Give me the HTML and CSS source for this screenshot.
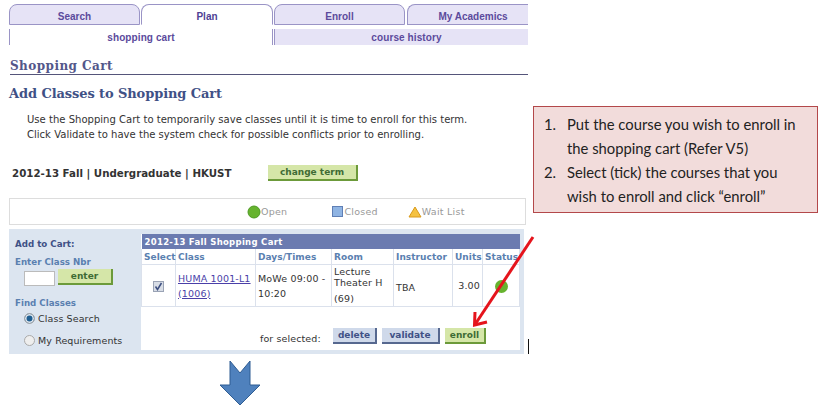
FILE: index.html
```html
<!DOCTYPE html>
<html lang="en">
<head>
    <meta charset="UTF-8">
    <meta name="viewport" content="width=device-width, initial-scale=1.0">
    <title>Shopping Cart</title>
    <link rel="stylesheet" href="styles.css">
</head>
<body>
    <div class="page">
        <div class="tabs">
            <div class="tab tab-search">Search</div>
            <div class="tab tab-plan active">Plan</div>
            <div class="tab tab-enroll">Enroll</div>
            <div class="tab tab-acad">My Academics</div>
        </div>
        <div class="subtabs">
            <div class="subtab sub-active">shopping cart</div>
            <div class="subtab sub-other">course history</div>
        </div>

        <h2 class="page-title">Shopping Cart</h2>
        <h1 class="main-title">Add Classes to Shopping Cart</h1>
        <p class="intro">Use the Shopping Cart to temporarily save classes until it is time to enroll for this term.<br>Click Validate to have the system check for possible conflicts prior to enrolling.</p>

        <div class="term-row">
            <span class="term">2012-13 Fall | Undergraduate | HKUST</span>
            <button class="btn btn-green btn-term">change term</button>
        </div>

        <div class="legend">
            <span class="legend-item legend-open"><svg width="14" height="14" viewBox="0 0 14 14"><circle cx="7" cy="7" r="6" fill="#66b32e" stroke="#4d9a22"/></svg>Open</span>
            <span class="legend-item legend-closed"><svg width="12" height="12" viewBox="0 0 12 12"><rect x="0.5" y="0.5" width="10" height="10" fill="#8fb4e3" stroke="#5f7fb5"/></svg>Closed</span>
            <span class="legend-item legend-wait"><svg width="14" height="12" viewBox="0 0 14 12"><path d="M7 1 L13 11 H1 Z" fill="#f5c242" stroke="#d99a1c"/></svg>Wait List</span>
        </div>

        <div class="cart-area">
            <div class="side">
                <div class="side-title">Add to Cart:</div>
                <div class="side-label">Enter Class Nbr</div>
                <div class="enter-row">
                    <input class="nbr" type="text">
                    <button class="btn btn-green btn-enter">enter</button>
                </div>
                <div class="side-label find">Find Classes</div>
                <label class="radio-row"><span class="radio checked"></span>Class Search</label>
                <label class="radio-row"><span class="radio"></span>My Requirements</label>
            </div>
            <div class="main">
                <table class="cart">
                    <colgroup>
                        <col class="c-select">
                        <col class="c-class">
                        <col class="c-days">
                        <col class="c-room">
                        <col class="c-inst">
                        <col class="c-units">
                        <col class="c-status">
                    </colgroup>
                    <thead>
                        <tr><th colspan="7" class="cart-head">2012-13 Fall Shopping Cart</th></tr>
                        <tr class="cols">
                            <th>Select</th>
                            <th>Class</th>
                            <th>Days/Times</th>
                            <th>Room</th>
                            <th>Instructor</th>
                            <th>Units</th>
                            <th>Status</th>
                        </tr>
                    </thead>
                    <tbody>
                        <tr>
                            <td class="center"><span class="check"><svg width="9" height="9" viewBox="0 0 9 9"><path d="M1.5 4.5 L3.5 7.5 L7.5 1" fill="none" stroke="#3d4f80" stroke-width="1.5"/></svg></span></td>
                            <td><a href="#">HUMA 1001-L1<br>(1006)</a></td>
                            <td>MoWe 09:00 -<br>10:20</td>
                            <td class="room">Lecture<br>Theater H<span class="room-no">(69)</span></td>
                            <td class="tba">TBA</td>
                            <td class="units">3.00</td>
                            <td class="center"><span class="dot"></span></td>
                        </tr>
                    </tbody>
                </table>
                <div class="actions">
                    <span class="for-selected">for selected:</span>
                    <button class="btn btn-blue btn-delete">delete</button>
                    <button class="btn btn-blue btn-validate">validate</button>
                    <button class="btn btn-green btn-enroll">enroll</button>
                </div>
            </div>
        </div>

        <!-- annotations on top of the screenshot -->
        <div class="callout">
            <ol>
                <li><span class="num">1.</span><span>Put the course you wish to enroll in<br>the shopping cart (Refer V5)</span></li>
                <li><span class="num">2.</span><span>Select (tick) the courses that you<br>wish to enroll and click “enroll”</span></li>
            </ol>
        </div>
        <span class="cursor"></span>
        <svg class="red-arrow" width="70" height="100" viewBox="0 0 70 100">
            <path d="M63 2 L6 88" fill="none" stroke="#e5141c" stroke-width="3"/>
            <path d="M5 77 L4.5 90 L17 87" fill="none" stroke="#e5141c" stroke-width="3"/>
        </svg>
        <svg class="down-arrow" width="42" height="48" viewBox="0 0 42 48">
            <path d="M11 1 L21 13 L31 1 V25 H41 L21 45 L1 25 H11 Z" fill="#4f81bd" stroke="#2f5d93"/>
        </svg>
    </div>
</body>
</html>
```

FILE: styles.css
```css
/* page */
body {
    margin: 0;
    background-color: #fff;
    font-family: "DejaVu Sans", sans-serif;
}
.page {
    position: relative;
    width: 823px;
    height: 406px;
    overflow: hidden;
    padding: 4px 0 0 9px;
    box-sizing: border-box;
}

/* tabs */
.tabs {
    display: flex;
    width: 519px;
    height: 21px;
}
.tab {
    box-sizing: border-box;
    height: 21px;
    background-color: #e6e3f6;
    border: 1px solid #9a94c6;
    border-radius: 8px 8px 0 0;
    color: #5b4a9c;
    font-family: "Liberation Sans", sans-serif;
    font-size: 10px;
    font-weight: bold;
    line-height: 23px;
    text-align: center;
}
.tab-search { width: 131px; margin-right: 1px; }
.tab-plan { width: 132px; margin-right: 1px; }
.tab-enroll { width: 131px; margin-right: 2px; }
.tab-acad {
    width: 121px;
    padding-left: 10px;
    border-right: none;
    border-radius: 8px 0 0 0;
}
.tab.active {
    background-color: #fff;
    border-bottom-color: #fff;
    color: #4f3f94;
}
.subtabs {
    display: flex;
    height: 16px;
    margin-top: 4px;
    width: 519px;
}
.subtab {
    box-sizing: border-box;
    height: 16px;
    font-family: "Liberation Sans", sans-serif;
    font-size: 10px;
    font-weight: bold;
    letter-spacing: 0.1px;
    line-height: 18px;
    text-align: center;
    color: #5b4a9c;
}
.sub-active {
    width: 264px;
    background-color: #fff;
    border-left: 1px solid #9a94c6;
    border-right: 1px solid #9a94c6;
}
.sub-other {
    width: 254px;
    margin-left: 1px;
    padding-left: 10px;
    background-color: #e6e3f6;
    border-left: 1px solid #9a94c6;
}

/* headings */
.page-title {
    box-sizing: border-box;
    width: 518px;
    height: 30px;
    margin: 0 0 0 1px;
    padding-top: 13px;
    border-bottom: 1px solid #55557a;
    color: #53578a;
    font-family: "DejaVu Serif", serif;
    font-size: 12px;
    font-weight: bold;
    letter-spacing: 0.45px;
    line-height: 16px;
}
.main-title {
    margin: 9px 0 0 0;
    color: #3f5186;
    font-family: "DejaVu Serif", serif;
    font-size: 13px;
    font-weight: bold;
    letter-spacing: -0.1px;
    line-height: 20px;
}
.intro {
    margin: 8px 0 0 18px;
    color: #333;
    font-size: 10.05px;
    line-height: 15px;
}

/* term row */
.term-row {
    display: flex;
    align-items: flex-start;
    height: 20px;
    margin-top: 22px;
}
.term {
    width: 259px;
    padding: 2px 0 0 3px;
    box-sizing: border-box;
    color: #333;
    font-size: 10.25px;
    font-weight: bold;
    line-height: 14px;
}
.btn {
    box-sizing: border-box;
    padding: 0;
    border: none;
    font-family: "DejaVu Sans", sans-serif;
    font-size: 9px;
    font-weight: bold;
    line-height: 13px;
}
.btn-green {
    background-color: #d5e6a8;
    border-right: 2px solid #6c9a3a;
    border-bottom: 2px solid #6c9a3a;
    color: #3f6b35;
}
.btn-blue {
    background-color: #cfd9ea;
    border-right: 2px solid #56688f;
    border-bottom: 2px solid #56688f;
    color: #3f5186;
}
.btn-term {
    width: 90px;
    height: 16px;
    margin-top: 1px;
}

/* legend */
.legend {
    box-sizing: border-box;
    display: flex;
    align-items: center;
    width: 517px;
    height: 27px;
    margin-top: 14px;
    padding-left: 237px;
    border: 1px solid #ddd;
    color: #999;
    font-size: 9.5px;
    letter-spacing: 0.25px;
}
.legend-item {
    display: flex;
    align-items: center;
}
.legend-closed { margin-left: 45px; }
.legend-wait { margin-left: 30px; }

/* cart area */
.cart-area {
    display: flex;
    box-sizing: border-box;
    width: 515px;
    height: 125px;
    margin-top: 4px;
    padding-bottom: 4px;
    background-color: #dce5f0;
}
.side {
    box-sizing: border-box;
    width: 132px;
    padding: 9px 0 0 6px;
    font-size: 8.7px;
}
.side-title {
    color: #3f5186;
    font-weight: bold;
    line-height: 12px;
}
.side-label {
    margin-top: 6px;
    color: #5a80b0;
    font-weight: bold;
    line-height: 12px;
}
.enter-row {
    display: flex;
    margin: 1px 0 0 9px;
}
.nbr {
    box-sizing: border-box;
    width: 31px;
    height: 15px;
    padding: 0;
    margin-top: 2px;
    background-color: #fff;
    border: 1px solid #bbb;
}
.btn-enter {
    width: 55px;
    height: 16px;
    margin-left: 3px;
}
.find {
    margin-top: 11px;
    margin-bottom: -1px;
}
.radio-row {
    display: flex;
    align-items: center;
    height: 20px;
    margin-bottom: 2px;
    margin-left: 9px;
    color: #333;
    font-size: 9.5px;
    letter-spacing: 0.1px;
}
.radio {
    box-sizing: border-box;
    width: 11px;
    height: 11px;
    margin-right: 3px;
    background-color: #eee;
    border: 1px solid #aaa;
    border-radius: 50%;
}
.radio.checked {
    background-color: #1f5f92;
    box-shadow: inset 0 0 0 1.5px #dfe6ee;
}
.main {
    flex: 1;
    background-color: #fff;
    margin-right: 4px;
    margin-top: 5px;
}

/* table */
.cart {
    width: 379px;
    table-layout: fixed;
    border-collapse: collapse;
    font-size: 9.5px;
    color: #333;
}
.cart-head {
    height: 15px;
    padding: 0 0 0 3px;
    background-color: #6b7bb0;
    color: #fff;
    font-size: 8.5px;
    font-weight: bold;
    letter-spacing: 0.3px;
    text-align: left;
}
.cols th {
    height: 15px;
    padding: 0 0 0 2px;
    border: 1px solid #dbe1ec;
    border-top: none;
    background-color: #fff;
    color: #5a80b0;
    font-size: 9px;
    font-weight: bold;
    letter-spacing: 0.05px;
    text-align: left;
    white-space: nowrap;
}
.cart td {
    height: 41px;
    padding: 0 2px;
    border: 1px solid #dbe1ec;
    letter-spacing: 0.15px;
    line-height: 15px;
    white-space: nowrap;
}
.c-select { width: 34px; }
.c-class { width: 80px; }
.c-days { width: 76px; }
.c-room { width: 62px; }
.c-inst { width: 59px; }
.c-units { width: 30px; }
.cart a { color: #4a3fa8; }
.cart .center { text-align: center; padding: 0; }
.cart .units { text-align: right; }
.cart .tba {
    height: 37px;
    padding-top: 4px;
}
.cart .room { line-height: 11px; }
.room-no {
    display: block;
    margin-top: 5px;
    line-height: 12px;
}
.check {
    display: inline-flex;
    align-items: center;
    justify-content: center;
    box-sizing: border-box;
    width: 11px;
    height: 11px;
    background-color: #d8dde6;
    border: 1px solid #9aa3b5;
    vertical-align: middle;
}
.dot {
    display: inline-block;
    width: 13px;
    height: 13px;
    background-color: #66b32e;
    border-radius: 50%;
    vertical-align: middle;
}
.actions {
    display: flex;
    align-items: center;
    height: 44px;
    padding: 14px 0 0 119px;
    box-sizing: border-box;
    font-size: 9.5px;
    color: #333;
}
.for-selected {
    width: 73px;
    margin-top: 5px;
    letter-spacing: 0.1px;
    white-space: nowrap;
}
.btn-delete, .btn-validate, .btn-enroll { height: 16px; }
.btn-delete { width: 44px; }
.btn-validate { width: 58px; margin-left: 5px; }
.btn-enroll { width: 41px; margin-left: 5px; }

/* annotations */
.callout {
    position: absolute;
    left: 533px;
    top: 106px;
    box-sizing: border-box;
    width: 285px;
    height: 107px;
    padding: 5px 6px 0 10px;
    background-color: #f2dcdb;
    border: 1px solid #b3484a;
    color: #222;
    font-family: "Lato", sans-serif;
    font-size: 14.8px;
    line-height: 24px;
}
.callout ol {
    margin: 0;
    padding: 0;
    list-style: none;
}
.callout li { display: flex; }
.num { width: 23px; }
.cursor {
    position: absolute;
    left: 528px;
    top: 339px;
    width: 1px;
    height: 15px;
    background-color: #111;
}
.red-arrow {
    position: absolute;
    left: 470px;
    top: 235px;
}
.down-arrow {
    position: absolute;
    left: 219px;
    top: 360px;
}
```
